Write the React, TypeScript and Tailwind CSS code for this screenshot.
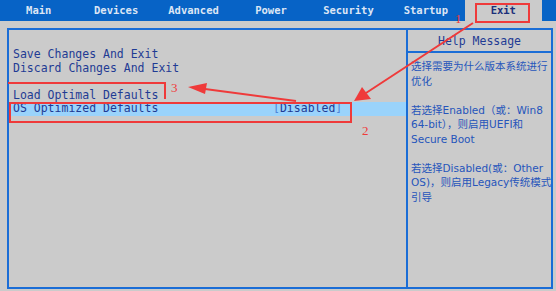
import React from 'react';

const TABS = ['Main', 'Devices', 'Advanced', 'Power', 'Security', 'Startup', 'Exit'];

const HELP_LINES = [
  '选择需要为什么版本系统进行',
  '优化',
  '',
  '若选择Enabled（或：Win8',
  '64-bit），则启用UEFI和',
  'Secure Boot',
  '',
  '若选择Disabled(或：Other',
  'OS)，则启用Legacy传统模式',
  '引导',
];

// red markup drawn over the screenshot
const Annotations: React.FC = () => {
  const red = '#ef3a3a';
  return (
    <svg className="absolute inset-0 pointer-events-none" width={556} height={291} viewBox="0 0 556 291">
      <g fill="none" stroke={red} strokeWidth={2}>
        <rect x={476} y={4} width={53} height={18} />
        <rect x={10} y={103} width={341} height={19} />
        <path d="M8 83 H165 V99" />
      </g>
      {/* arrow 1: Exit -> OS Optimized Defaults */}
      <line x1={473} y1={23} x2={366} y2={93} stroke={red} strokeWidth={2} />
      <polygon points="354,101 362,87 371,99" fill={red} />
      {/* arrow 2: row -> Load Optimal Defaults */}
      <line x1={296} y1={101} x2={205} y2={89} stroke={red} strokeWidth={2} />
      <polygon points="188,87 207,83 205,94" fill={red} />
      <g fill={red} fontFamily="'Liberation Serif', serif" fontSize={13}>
        <text x={455} y={23}>1</text>
        <text x={362} y={135}>2</text>
        <text x={171} y={92}>3</text>
      </g>
    </svg>
  );
};

export default function App() {
  return (
    <div className="relative w-[556px] h-[291px] overflow-hidden bg-[#cbcbcb] font-['DejaVu_Sans_Mono',monospace]">
      {/* tab bar */}
      <div className="flex h-[21px] bg-[#0763c6]">
        <div className="grid grid-cols-7 w-[542px]">
          {TABS.map((t) =>
            t === 'Exit' ? (
              <div key={t} className="flex items-center justify-center bg-[#cbcbcb] text-[10.5px] font-bold text-[#1b2f7a]">
                {t}
              </div>
            ) : (
              <div key={t} className="flex items-center justify-center text-[10.5px] font-bold text-[#dce6f5]">
                {t}
              </div>
            )
          )}
        </div>
      </div>

      {/* main frame */}
      <div className="ml-[7px] mt-[7px] flex w-[546px] h-[261px] border-2 border-[#1a6dd6]">
        {/* left menu */}
        <div className="w-[397px] shrink-0 overflow-hidden pt-[18px] text-[11.5px] leading-[13.5px] text-[#1f3b94]">
          <div className="pl-[4px] whitespace-nowrap">Save Changes And Exit</div>
          <div className="pl-[4px] whitespace-nowrap">Discard Changes And Exit</div>
          <div className="h-[13.5px]" />
          <div className="pl-[4px] whitespace-nowrap">Load Optimal Defaults</div>
          <div className="flex h-[13.5px] bg-[#9ad3fb] whitespace-nowrap">
            <div className="pl-[4px] w-[264px]">OS Optimized Defaults</div>
            <div>
              <span className="text-[#4f86d8]">[</span>Disabled<span className="text-[#4f86d8]">]</span>
            </div>
          </div>
        </div>

        {/* divider */}
        <div className="w-[2px] shrink-0 bg-[#1a6dd6]" />

        {/* help panel */}
        <div className="flex-1 min-w-0 flex flex-col">
          <div className="h-[23px] pt-[2px] flex items-center justify-center text-[11.5px] text-[#1f3b94] border-b-2 border-[#1a6dd6]">
            Help Message
          </div>
          <div className="pt-[6px] pl-[3px] text-[10.5px] leading-[14.5px] text-[#2655bb] font-['DejaVu_Sans','Noto_Sans_CJK_SC',sans-serif]">
            {HELP_LINES.map((l, i) => (
              <div key={i} className="h-[14.5px] whitespace-nowrap">
                {l}
              </div>
            ))}
          </div>
        </div>
      </div>

      <Annotations />
    </div>
  );
}
